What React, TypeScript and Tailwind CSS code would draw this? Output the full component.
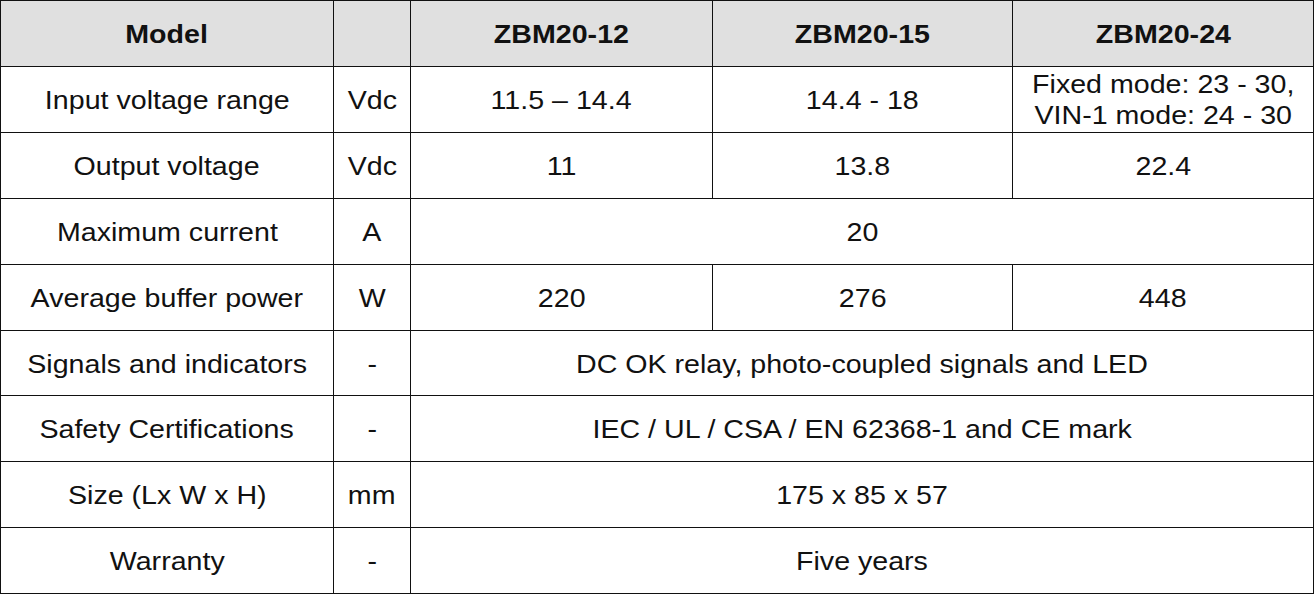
import React from 'react';

type Row = {
  label: string;
  unit: string;
  values: string[];
};

const rows: Row[] = [
  { label: 'Input voltage range', unit: 'Vdc', values: ['11.5 – 14.4', '14.4 - 18', 'Fixed mode: 23 - 30,\nVIN-1 mode: 24 - 30'] },
  { label: 'Output voltage', unit: 'Vdc', values: ['11', '13.8', '22.4'] },
  { label: 'Maximum current', unit: 'A', values: ['20'] },
  { label: 'Average buffer power', unit: 'W', values: ['220', '276', '448'] },
  { label: 'Signals and indicators', unit: '-', values: ['DC OK relay, photo-coupled signals and LED'] },
  { label: 'Safety Certifications', unit: '-', values: ['IEC / UL / CSA / EN 62368-1 and CE mark'] },
  { label: 'Size (Lx W x H)', unit: 'mm', values: ['175 x 85 x 57'] },
  { label: 'Warranty', unit: '-', values: ['Five years'] },
];

const cell = 'border border-[#111] text-center align-middle px-0 pt-[2px] pb-0';

// the source table renders slightly wide, so stretch text a touch
function T({ children }: { children: React.ReactNode }) {
  return <span className="inline-block whitespace-pre-line scale-x-[1.1]">{children}</span>;
}

export default function App() {
  return (
    <div className="w-[1314px] h-[594px] bg-white text-[#111] font-['Liberation_Sans',Arial,sans-serif] text-[26px] leading-[31px]">
      <table className="w-[1313px] table-fixed border-collapse">
        <colgroup>
          <col className="w-[333px]" />
          <col className="w-[77px]" />
          <col className="w-[302px]" />
          <col className="w-[300px]" />
          <col className="w-[301px]" />
        </colgroup>
        <thead>
          <tr className="h-[66px] bg-[#e0e0e0] font-bold">
            <th className={cell}><T>Model</T></th>
            <th className={cell}></th>
            <th className={cell}><T>ZBM20-12</T></th>
            <th className={cell}><T>ZBM20-15</T></th>
            <th className={cell}><T>ZBM20-24</T></th>
          </tr>
        </thead>
        <tbody>
          {rows.map((row) => (
            <tr key={row.label} className="h-[65.9px]">
              <td className={cell}><T>{row.label}</T></td>
              <td className={cell}><T>{row.unit}</T></td>
              {row.values.length === 1 ? (
                <td className={cell} colSpan={3}><T>{row.values[0]}</T></td>
              ) : (
                row.values.map((v, i) => (
                  <td key={i} className={cell}><T>{v}</T></td>
                ))
              )}
            </tr>
          ))}
        </tbody>
      </table>
    </div>
  );
}
